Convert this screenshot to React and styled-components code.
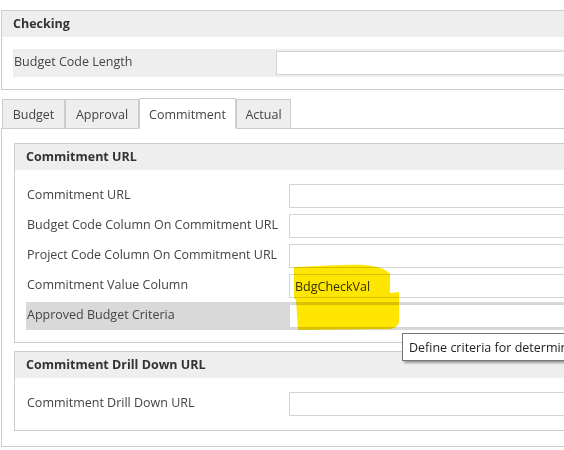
import React from 'react';
import styled, { createGlobalStyle } from 'styled-components';

const GlobalStyle = createGlobalStyle`
  body {
    margin: 0;
    overflow: hidden;
    background: #fff;
    font-family: "Open Sans", "Noto Sans", sans-serif;
    font-size: 12.5px;
    color: #333;
  }
`;

const Page = styled.div`
  width: 820px;
  padding: 10px 0 0 1px;
`;

const Panel = styled.section`
  border: 1px solid #cccccc;
  background: #fff;
  & + & {
    margin-top: 8px;
  }
`;

const PanelHeader = styled.div`
  height: 26px;
  display: flex;
  align-items: center;
  padding: 0 0 1px 11px;
  box-sizing: border-box;
  background: #eeeeee;
  font-weight: 700;
  color: #333;
`;

const PanelBody = styled.div`
  display: flex;
  flex-direction: column;
  gap: 2px;
  padding: 12px 11px 12px 11px;
`;

const Row = styled.div`
  position: relative;
  display: grid;
  grid-template-columns: 263px 1fr;
  height: 28px;
  background: ${(p) => (p.$shade === 'dark' ? '#d9d9d9' : p.$shade === 'light' ? '#eeeeee' : 'transparent')};
`;

const Label = styled.label`
  padding: 4px 0 0 1px;
  line-height: 18px;
  color: #444;
`;

const Field = styled.div`
  align-self: center;
  height: 24px;
  box-sizing: border-box;
  border: 1px solid #d4d4d4;
  background: #fff;
  padding-left: 5px;
  line-height: 24px;
  color: #333;
`;

const TabStrip = styled.div`
  display: flex;
  margin-top: 8px;
  padding-left: 1px;
  border-bottom: 1px solid #cccccc;
`;

const Tab = styled.div`
  box-sizing: border-box;
  width: ${(p) => p.$width}px;
  height: ${(p) => (p.$active ? 31 : 30)}px;
  margin-top: ${(p) => (p.$active ? 0 : 1)}px;
  margin-bottom: -1px;
  display: flex;
  align-items: center;
  justify-content: center;
  padding-top: 1px;
  border: 1px solid #cccccc;
  border-bottom-color: ${(p) => (p.$active ? '#fff' : '#cccccc')};
  background: ${(p) => (p.$active ? '#fff' : '#eeeeee')};
  color: #444;
`;

const TabBody = styled.div`
  border: 1px solid #cccccc;
  border-top: none;
  padding: 14px 12px 15px 12px;
`;

const Marker = styled.svg`
  position: absolute;
  left: 266px;
  top: -8px;
  width: 112px;
  height: 70px;
  mix-blend-mode: multiply;
  pointer-events: none;
  z-index: 2;
`;

const Tooltip = styled.div`
  position: absolute;
  left: 376px;
  top: 31px;
  height: 28px;
  box-sizing: border-box;
  display: flex;
  align-items: center;
  padding: 0 6px;
  border: 1px solid #767676;
  background: #fff;
  color: #222;
  white-space: nowrap;
  box-shadow: 2px 2px 2px rgba(0, 0, 0, 0.35);
  z-index: 3;
`;

const tabs = [
  { name: 'Budget', width: 63 },
  { name: 'Approval', width: 74 },
  { name: 'Commitment', width: 97, active: true },
  { name: 'Actual', width: 55 },
];

const Highlight = () => (
  <Marker viewBox="0 0 112 70">
    <path
      d="M2 3 C30 2 60 0 72 1 C86 2 94 5 98 10 L98 29 L107 28 L107 58 C106 62 103 64 99 65 L6 66 L4 36 L2 34 Z"
      fill="#ffe600"
    />
  </Marker>
);

const App = () => (
  <>
    <GlobalStyle />
    <Page>
      <Panel>
        <PanelHeader>Checking</PanelHeader>
        <PanelBody>
          <Row $shade="light">
            <Label>Budget Code Length</Label>
            <Field />
          </Row>
        </PanelBody>
      </Panel>

      <TabStrip>
        {tabs.map((t) => (
          <Tab key={t.name} $width={t.width} $active={t.active}>
            {t.name}
          </Tab>
        ))}
      </TabStrip>

      <TabBody>
        <Panel>
          <PanelHeader>Commitment URL</PanelHeader>
          <PanelBody>
            <Row>
              <Label>Commitment URL</Label>
              <Field />
            </Row>
            <Row>
              <Label>Budget Code Column On Commitment URL</Label>
              <Field />
            </Row>
            <Row>
              <Label>Project Code Column On Commitment URL</Label>
              <Field />
            </Row>
            <Row>
              <Label>Commitment Value Column</Label>
              <Field>BdgCheckVal</Field>
              <Highlight />
            </Row>
            <Row $shade="dark">
              <Label>Approved Budget Criteria</Label>
              <Field />
              <Tooltip>Define criteria for determining the approved budget</Tooltip>
            </Row>
          </PanelBody>
        </Panel>

        <Panel>
          <PanelHeader>Commitment Drill Down URL</PanelHeader>
          <PanelBody>
            <Row>
              <Label>Commitment Drill Down URL</Label>
              <Field />
            </Row>
          </PanelBody>
        </Panel>
      </TabBody>
    </Page>
  </>
);

export default App;
